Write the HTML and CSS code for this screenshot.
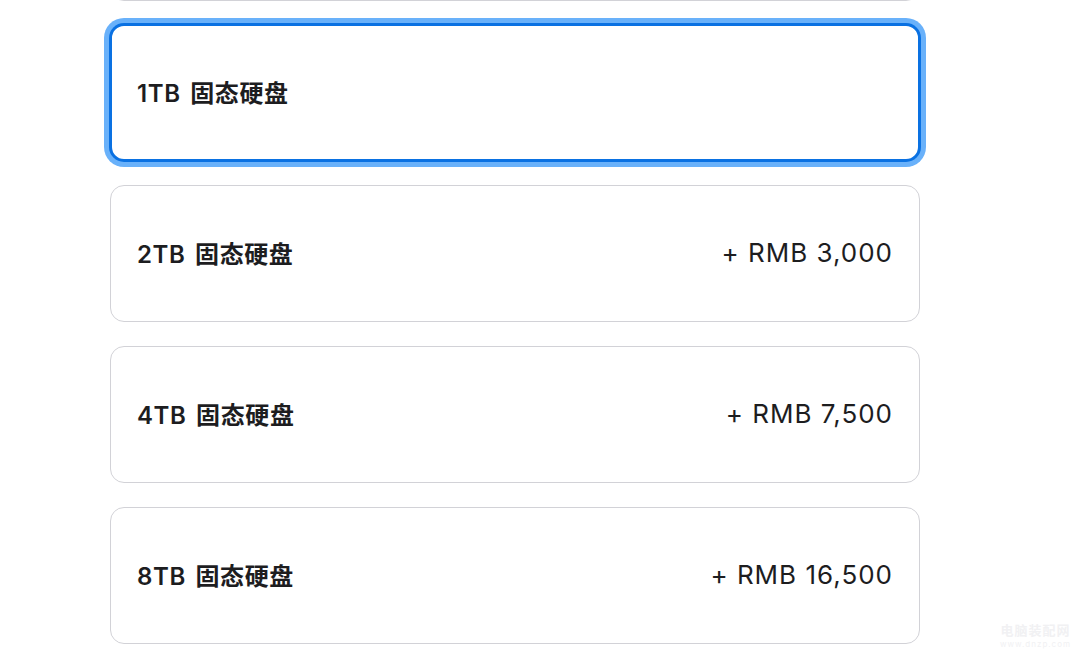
FILE: index.html
```html
<!DOCTYPE html>
<html lang="zh-CN">
<head>
    <meta charset="UTF-8">
    <meta name="viewport" content="width=device-width, initial-scale=1.0">
    <title>存储容量</title>
    <link rel="stylesheet" href="styles.css">
</head>
<body>
    <div class="options">
      <div class="option option-ghost">
        <span class="option-name">512GB 固态硬盘</span>
      </div>
      <div class="option selected">
        <span class="option-name">1TB 固态硬盘</span>
      </div>
      <div class="option">
        <span class="option-name">2TB 固态硬盘</span>
        <span class="option-price">+ RMB 3,000</span>
      </div>
      <div class="option">
        <span class="option-name">4TB 固态硬盘</span>
        <span class="option-price">+ RMB 7,500</span>
      </div>
      <div class="option">
        <span class="option-name">8TB 固态硬盘</span>
        <span class="option-price">+ RMB 16,500</span>
      </div>
    </div>
    <div class="watermark">
      <div class="wm-name">电脑装配网</div>
      <div class="wm-url">www.dnzp.com</div>
    </div>
</body>
</html>
```

FILE: styles.css
```css
body {
    margin: 0;
    background: #fff;
    color: #1d1d1f;
    font-family: Inter, "Noto Sans CJK SC", sans-serif;
    overflow: hidden;
}
.options {
    display: flex;
    flex-direction: column;
    gap: 24px;
    width: 810px;
    margin-left: 110px;
    margin-top: -136px;
}
.option {
    box-sizing: border-box;
    height: 137px;
    display: flex;
    align-items: center;
    justify-content: space-between;
    padding: 0 26px 2px;
    border: 1px solid #d2d2d7;
    border-radius: 14px;
    background: #fff;
}
.option-ghost {
    margin-bottom: -1px;
}
.option-ghost .option-name {
    visibility: hidden;
}
.option.selected {
    border: 2px solid #0a71e2;
    padding: 0 25px 2px;
    box-shadow: 0 0 0 1px #0a71e2, 0 0 0 6px #69b1fa;
}
.option-name {
    font-size: 24px;
    font-weight: 600;
    letter-spacing: 0.6px;
    word-spacing: 3px;
}
.option-price {
    font-size: 26px;
    font-weight: 400;
    letter-spacing: 1px;
}
.watermark {
    position: absolute;
    left: 1000px;
    top: 620px;
    color: #f1f1f3;
    text-align: center;
}
.wm-name {
    font-size: 13px;
    font-weight: 700;
    letter-spacing: 1px;
}
.wm-url {
    font-size: 8px;
    letter-spacing: 1px;
}
```
